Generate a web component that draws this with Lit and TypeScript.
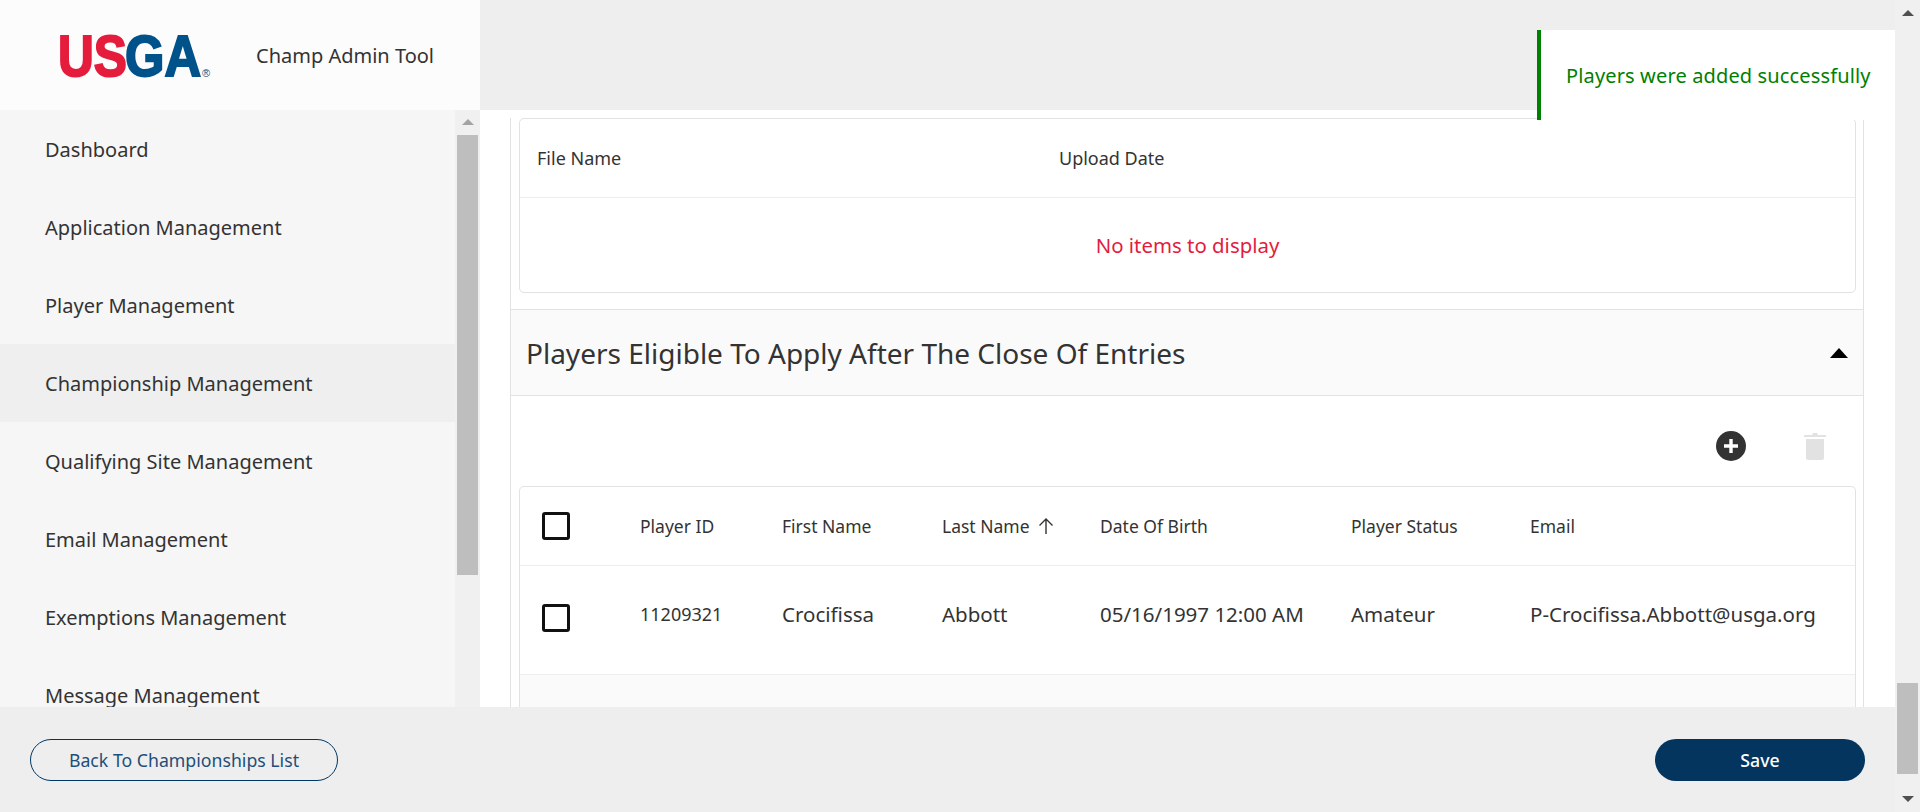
import { LitElement, html, css } from 'lit'
import { customElement } from 'lit/decorators.js'

const NAV_ITEMS = [
  'Dashboard',
  'Application Management',
  'Player Management',
  'Championship Management',
  'Qualifying Site Management',
  'Email Management',
  'Exemptions Management',
  'Message Management',
]

@customElement('app-root')
export class AppRoot extends LitElement {
  static styles = css`
    :host {
      display: block;
      height: 812px;
      overflow: hidden;
      font-family: 'Noto Sans', 'Open Sans', sans-serif;
      color: #333;
      background: #eee;
    }

    .page {
      position: relative;
      display: grid;
      grid-template-columns: 480px 1415px 25px;
      grid-template-rows: 110px 597px 105px;
      height: 812px;
    }

    .brand {
      display: flex;
      align-items: center;
      background: #fcfcfc;
      padding-left: 55px;
    }

    .logo {
      width: 165px;
      height: 50px;
      display: block;
      flex: none;
    }

    .logo-text {
      font-family: 'Liberation Sans', sans-serif;
      font-weight: 700;
      font-size: 58px;
      stroke-width: 2px;
    }

    .logo-mark {
      font-family: 'Liberation Sans', sans-serif;
      font-size: 11px;
    }

    .app-name {
      margin-left: 36px;
      font-size: 20px;
      color: #333;
    }

    .topbar {
      grid-column: 2;
      background: #eee;
    }

    .page-scroll {
      grid-column: 3;
      grid-row: 1 / 4;
      background: #f0f0f0;
      display: flex;
      flex-direction: column;
      align-items: center;
    }

    .page-scroll .up {
      margin-top: 10px;
      border: 6px solid transparent;
      border-top: 0;
      border-bottom: 6px solid #505050;
    }

    .page-scroll .thumb {
      width: 21px;
      height: 91px;
      margin-top: 667px;
      background: #bebebe;
    }

    .page-scroll .down {
      margin-top: 22px;
      border: 6px solid transparent;
      border-bottom: 0;
      border-top: 6px solid #505050;
    }

    .nav {
      grid-column: 1;
      grid-row: 2;
      display: flex;
      overflow: hidden;
      background: #f6f6f6;
    }

    .nav-list {
      flex: 1;
      min-width: 0;
    }

    .nav-item {
      display: flex;
      align-items: center;
      height: 78px;
      padding-left: 45px;
      font-size: 20px;
      color: #333;
      box-sizing: border-box;
    }

    .nav-item.active {
      background: #efefef;
    }

    .nav-scroll {
      width: 25px;
      flex: none;
      background: #f0f0f0;
      display: flex;
      flex-direction: column;
      align-items: center;
    }

    .nav-scroll .up {
      margin-top: 9px;
      border: 6px solid transparent;
      border-top: 0;
      border-bottom: 6px solid #a3a3a3;
    }

    .nav-scroll .thumb {
      width: 21px;
      height: 440px;
      margin-top: 10px;
      background: #bebebe;
    }

    .main {
      grid-column: 2;
      grid-row: 2;
      background: #fff;
      overflow: hidden;
      padding: 8px 31px 0 30px;
    }

    .panel {
      border-left: 1px solid #e2e2e2;
      border-right: 1px solid #e2e2e2;
      height: 100%;
      display: flex;
      flex-direction: column;
    }

    .files {
      padding: 0 7px 16px 8px;
    }

    .card {
      border: 1px solid #e2e2e2;
      border-radius: 5px;
      background: #fff;
    }

    .files .card {
      height: 175px;
      box-sizing: border-box;
    }

    .file-head {
      display: flex;
      align-items: center;
      height: 78px;
      padding-left: 17px;
      border-bottom: 1px solid #eee;
      font-size: 18px;
    }

    .file-head span:first-child {
      width: 522px;
    }

    .empty {
      display: flex;
      align-items: center;
      justify-content: center;
      height: 78px;
      padding-top: 16px;
      box-sizing: border-box;
      font-size: 20.4px;
      color: #e31c3d;
    }

    .section-head {
      display: flex;
      align-items: center;
      justify-content: space-between;
      height: 87px;
      padding: 0 15px;
      box-sizing: border-box;
      background: #fafafa;
      border-top: 1px solid #e2e2e2;
      border-bottom: 1px solid #e2e2e2;
      flex: none;
    }

    .section-head h2 {
      margin: 0;
      font-size: 28px;
      font-weight: 400;
      color: #333;
    }

    .caret {
      border: 9px solid transparent;
      border-top: 0;
      border-bottom: 10px solid #000;
    }

    .toolbar {
      display: flex;
      align-items: center;
      justify-content: flex-end;
      gap: 58px;
      height: 90px;
      box-sizing: border-box;
      padding: 10px 37px 0 0;
      flex: none;
    }

    .toolbar svg {
      display: block;
    }

    .players {
      margin: 0 7px 0 8px;
      flex: 1;
      border-bottom: 0;
      border-radius: 5px 5px 0 0;
    }

    .row {
      display: grid;
      grid-template-columns: 120px 142px 160px 158px 251px 179px 1fr;
      align-items: center;
    }

    .row.head {
      height: 78px;
      border-bottom: 1px solid #eee;
      font-size: 17.5px;
    }

    .row.body {
      height: 109px;
      box-sizing: border-box;
      padding-bottom: 12px;
      border-bottom: 1px solid #eee;
      font-size: 20.5px;
    }

    .row.body .player-id {
      font-size: 18px;
    }

    .filler {
      height: 100px;
      background: #fafafa;
    }

    .check {
      width: 28px;
      height: 28px;
      box-sizing: border-box;
      margin-left: 22px;
      border: 3px solid #111;
      border-radius: 3px;
      background: #fff;
    }

    .row.body .check {
      margin-top: 8px;
    }

    .sort {
      display: inline-flex;
      align-items: center;
      gap: 8px;
    }

    .footer {
      grid-column: 1 / 3;
      grid-row: 3;
      display: flex;
      align-items: flex-start;
      justify-content: space-between;
      padding: 32px 30px 0;
      background: #eee;
    }

    .btn {
      display: flex;
      align-items: center;
      justify-content: center;
      height: 42px;
      box-sizing: border-box;
      border-radius: 21px;
      font-size: 17.7px;
    }

    .btn.outline {
      width: 308px;
      border: 1px solid #003865;
      color: #1f4e79;
    }

    .btn.solid {
      width: 210px;
      background: #03355e;
      color: #fff;
      font-weight: 500;
    }

    .toast {
      position: absolute;
      left: 1537px;
      top: 30px;
      width: 358px;
      height: 90px;
      box-sizing: border-box;
      display: flex;
      align-items: center;
      padding-left: 25px;
      background: #fff;
      border-left: 4px solid #008000;
      color: #008000;
      font-size: 20px;
      letter-spacing: 0.14px;
    }
  `

  render() {
    return html`
      <div class="page">
        <div class="brand">
          <svg class="logo" viewBox="0 0 165 50" role="img" aria-label="USGA">
            <text class="logo-text" x="3" y="46" textLength="69" lengthAdjust="spacingAndGlyphs" fill="#e51c3c" stroke="#e51c3c">US</text>
            <text class="logo-text" x="70" y="46" textLength="76" lengthAdjust="spacingAndGlyphs" fill="#00528a" stroke="#00528a">GA</text>
            <text class="logo-mark" x="147" y="47" fill="#00528a">®</text>
          </svg>
          <div class="app-name">Champ Admin Tool</div>
        </div>
        <div class="topbar"></div>
        <div class="page-scroll">
          <div class="up"></div>
          <div class="thumb"></div>
          <div class="down"></div>
        </div>
        <nav class="nav">
          <div class="nav-list">
            ${NAV_ITEMS.map(
              (item) => html`<div class="nav-item ${item === 'Championship Management' ? 'active' : ''}">${item}</div>`
            )}
          </div>
          <div class="nav-scroll">
            <div class="up"></div>
            <div class="thumb"></div>
          </div>
        </nav>
        <main class="main">
          <div class="panel">
            <div class="files">
              <div class="card">
                <div class="file-head"><span>File Name</span><span>Upload Date</span></div>
                <div class="empty">No items to display</div>
              </div>
            </div>
            <div class="section-head">
              <h2>Players Eligible To Apply After The Close Of Entries</h2>
              <div class="caret"></div>
            </div>
            <div class="toolbar">
              <svg width="30" height="30" viewBox="0 0 30 30">
                <circle cx="15" cy="15" r="15" fill="#333" />
                <path d="M15 8v14M8 15h14" stroke="#fff" stroke-width="3.4" />
              </svg>
              <svg width="22" height="28" viewBox="0 0 22 28">
                <path d="M0 3h8l1-2h4l1 2h8v2H0zM2 7h18v19a2 2 0 0 1-2 2H4a2 2 0 0 1-2-2z" fill="#e2e2e2" />
              </svg>
            </div>
            <div class="card players">
              <div class="row head">
                <div><div class="check"></div></div>
                <div>Player ID</div>
                <div>First Name</div>
                <div>
                  <span class="sort">Last Name
                    <svg width="16" height="18" viewBox="0 0 16 18">
                      <path d="M8 17V2M1.500 8.500 8 2l6.500 6.500" fill="none" stroke="#333" stroke-width="1.400" />
                    </svg>
                  </span>
                </div>
                <div>Date Of Birth</div>
                <div>Player Status</div>
                <div>Email</div>
              </div>
              <div class="row body">
                <div><div class="check"></div></div>
                <div class="player-id">11209321</div>
                <div>Crocifissa</div>
                <div>Abbott</div>
                <div>05/16/1997 12:00 AM</div>
                <div>Amateur</div>
                <div>P-Crocifissa.Abbott@usga.org</div>
              </div>
              <div class="filler"></div>
            </div>
          </div>
        </main>
        <footer class="footer">
          <div class="btn outline">Back To Championships List</div>
          <div class="btn solid">Save</div>
        </footer>
        <div class="toast">Players were added successfully</div>
      </div>
    `
  }
}
